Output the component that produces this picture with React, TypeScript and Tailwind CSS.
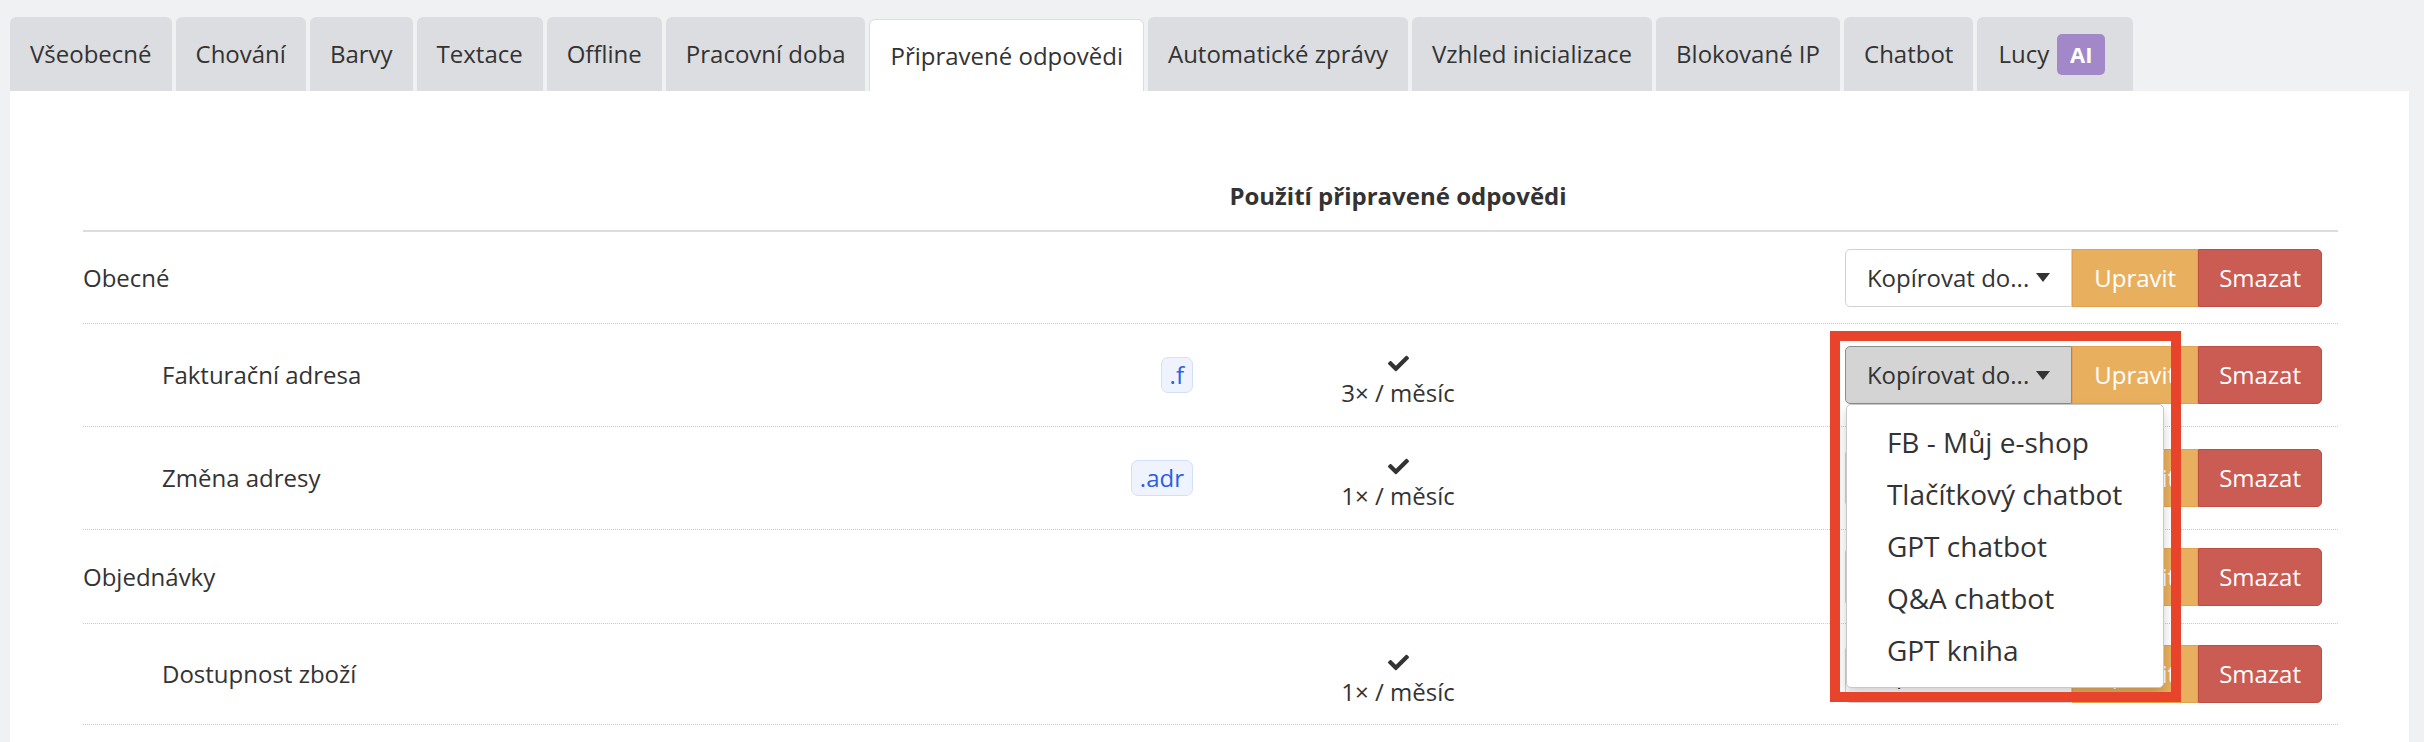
import { FaCheck } from "react-icons/fa";

const tabs = [
  "Všeobecné",
  "Chování",
  "Barvy",
  "Textace",
  "Offline",
  "Pracovní doba",
  "Připravené odpovědi",
  "Automatické zprávy",
  "Vzhled inicializace",
  "Blokované IP",
  "Chatbot",
];

type Row = {
  name: string;
  sub?: boolean;
  badge?: string;
  usage?: string;
  h: string;
  open?: boolean;
};

const rows: Row[] = [
  { name: "Obecné", h: "h-[92px]" },
  { name: "Fakturační adresa", sub: true, badge: ".f", usage: "3× / měsíc", h: "h-[103px]", open: true },
  { name: "Změna adresy", sub: true, badge: ".adr", usage: "1× / měsíc", h: "h-[103px]" },
  { name: "Objednávky", h: "h-[94px]" },
  { name: "Dostupnost zboží", sub: true, usage: "1× / měsíc", h: "h-[101px]" },
];

const bots = ["FB - Můj e-shop", "Tlačítkový chatbot", "GPT chatbot", "Q&A chatbot", "GPT kniha"];

const Caret = () => (
  <svg width="14" height="9" viewBox="0 0 14 9" className="ml-[7px]">
    <path d="M0 0h14L7 9z" fill="#333" />
  </svg>
);

const Actions = ({ open }: { open?: boolean }) => (
  <div className="relative flex h-[58px]">
    <div
      className={
        open
          ? "flex items-center rounded-l-[5px] border border-[#8c8c8c] bg-[#d4d4d4] pl-[21px] pr-[21px]"
          : "flex items-center rounded-l-[5px] border border-[#d2d2d2] bg-white pl-[21px] pr-[21px]"
      }
    >
      <span>Kopírovat do...</span>
      <Caret />
    </div>
    <div className="flex items-center border border-[#e2a34c] bg-[#e8b05e] px-[21px] text-white">Upravit</div>
    <div className="flex items-center rounded-r-[5px] border border-[#c14c44] bg-[#ca5c54] px-[20px] text-white">Smazat</div>
    {open && (
      <>
        {/* otevřené menu "Kopírovat do..." */}
        <div className="absolute left-[1px] top-[58px] z-10 w-[318px] rounded-[5px] border border-[#c8c8c8] bg-white pb-[11px] pt-[11px] text-[28px] shadow-[0_6px_12px_rgba(0,0,0,0.18)]">
          {bots.map((b) => (
            <div key={b} className="flex h-[52px] items-center pl-[40px]">
              {b}
            </div>
          ))}
        </div>
        <div className="pointer-events-none absolute left-[-15px] top-[-15px] z-20 h-[371px] w-[351px] border-[10px] border-[#e8432b]" />
      </>
    )}
  </div>
);

export default function App() {
  return (
    <div
      className="min-h-screen bg-[#f0f1f3] pt-[17px] pl-[10px] pr-[15px] text-[24px] text-[#333]"
      style={{ fontFamily: '"Open Sans", "Noto Sans", sans-serif' }}
    >
      <div className="flex h-[74px] gap-[4px]">
        {tabs.map((t) =>
          t === "Připravené odpovědi" ? (
            <div
              key={t}
              className="mt-[2px] flex items-center rounded-t-[6px] border border-b-0 border-[#dcdcdc] bg-white px-[20px]"
            >
              {t}
            </div>
          ) : (
            <div key={t} className="flex items-center rounded-t-[6px] bg-[#dcdde0] px-[20px]">
              {t}
            </div>
          )
        )}
        <div className="flex items-center rounded-t-[6px] bg-[#dcdde0] pl-[21px] pr-[28px]">
          Lucy
          <span className="ml-[8px] flex h-[41px] w-[48px] items-center justify-center rounded-[5px] bg-[#a388c9] text-[22px] font-bold text-white">
            AI
          </span>
        </div>
      </div>

      <div className="bg-white pl-[73px] pr-[71px]">
        <div className="grid h-[141px] grid-cols-[1110px_410px_1fr] items-end border-b-2 border-[#dddddd] pb-[19px]">
          <div />
          <div className="text-center font-bold leading-[30px]">Použití připravené odpovědi</div>
          <div />
        </div>

        {rows.map((r) => (
          <div
            key={r.name}
            className={`grid grid-cols-[1110px_410px_1fr] items-center border-b border-dotted border-[#c9c9c9] ${r.h}`}
          >
            <div className={`flex items-center justify-between ${r.sub ? "pl-[79px]" : ""}`}>
              <span>{r.name}</span>
              {r.badge && (
                <span className="flex h-[36px] items-center rounded-[7px] border border-[#d3e0fb] bg-[#eef3fe] px-[8px] text-[#2c5ee4]">
                  {r.badge}
                </span>
              )}
            </div>
            <div className="flex flex-col items-center pt-[10px]">
              {r.usage && (
                <>
                  <FaCheck size={21} color="#333" />
                  <span className="mt-[4px] leading-[30px]">{r.usage}</span>
                </>
              )}
            </div>
            <div className="flex justify-end pr-[16px]">
              <Actions open={r.open} />
            </div>
          </div>
        ))}
        <div className="h-[40px]" />
      </div>
    </div>
  );
}
